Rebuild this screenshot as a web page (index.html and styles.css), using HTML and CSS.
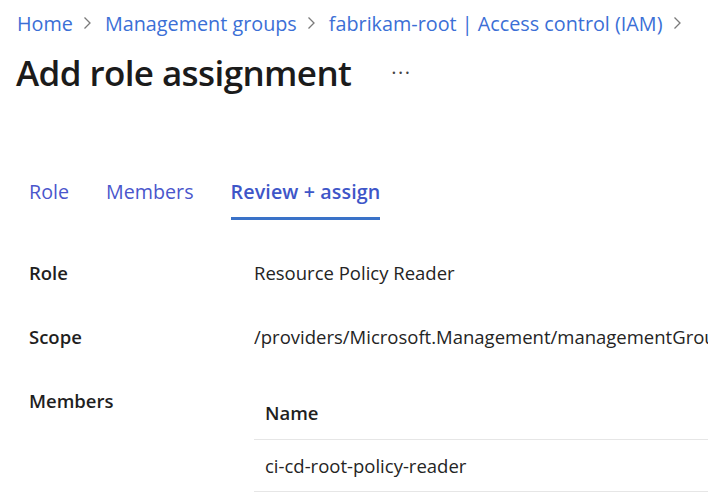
FILE: index.html
```html
<!DOCTYPE html>
<html lang="en">
<head>
<meta charset="utf-8">
<title>Add role assignment</title>
<link rel="stylesheet" href="styles.css">
</head>
<body>
<div class="page">
  <nav class="breadcrumb">
    <a class="crumb" href="#">Home</a>
    <span class="chev"><svg width="9" height="14" viewBox="0 0 9 14"><path d="M1.5 1.5 L7 7 L1.5 12.5" fill="none" stroke="#7a7a7a" stroke-width="1.3"/></svg></span>
    <a class="crumb" href="#">Management groups</a>
    <span class="chev"><svg width="9" height="14" viewBox="0 0 9 14"><path d="M1.5 1.5 L7 7 L1.5 12.5" fill="none" stroke="#7a7a7a" stroke-width="1.3"/></svg></span>
    <a class="crumb" href="#">fabrikam-root | Access control (IAM)</a>
    <span class="chev"><svg width="9" height="14" viewBox="0 0 9 14"><path d="M1.5 1.5 L7 7 L1.5 12.5" fill="none" stroke="#7a7a7a" stroke-width="1.3"/></svg></span>
  </nav>
  <header class="title-row">
    <h1 class="title">Add role assignment</h1>
    <span class="more">···</span>
  </header>
  <div class="tabs">
    <span class="tab">Role</span>
    <span class="tab">Members</span>
    <span class="tab active">Review + assign</span>
  </div>
  <div class="details">
    <div class="row">
      <div class="label">Role</div>
      <div class="value">Resource Policy Reader</div>
    </div>
    <div class="row">
      <div class="label">Scope</div>
      <div class="value clip">/providers/Microsoft.Management/managementGroups</div>
    </div>
    <div class="row">
      <div class="label">Members</div>
      <div class="value">
        <div class="table">
          <div class="th">Name</div>
          <div class="td">ci-cd-root-policy-reader</div>
        </div>
      </div>
    </div>
  </div>
</div>
</body>
</html>
```
FILE: styles.css
```css
html, body {
  margin: 0;
  padding: 0;
  background: #ffffff;
  overflow: hidden;
}
body {
  font-family: "Open Sans", "Noto Sans", "Liberation Sans", sans-serif;
  color: #242424;
}
.page {
  width: 708px;
  height: 495px;
  overflow: hidden;
}
.breadcrumb {
  display: flex;
  align-items: center;
  padding: 9px 0 0 17px;
  height: 28px;
  font-size: 19.8px;
  white-space: nowrap;
}
.crumb {
  color: #3b6fd6;
  text-decoration: none;
}
.chev {
  display: flex;
  align-items: center;
  margin: 0 13px 0 10px;
}
.title-row {
  display: flex;
  align-items: center;
  gap: 40px;
  padding: 12px 0 0 16px;
}
.title {
  margin: 0;
  font-size: 35px;
  font-weight: 600;
  color: #1b1b1b;
  letter-spacing: -0.6px;
  line-height: 48px;
}
.more {
  font-size: 20px;
  color: #444;
  letter-spacing: 1.5px;
  margin-top: -2px;
}
.tabs {
  display: flex;
  gap: 37px;
  padding: 82px 0 0 29px;
}
.tab {
  font-size: 19.7px;
  color: #4a56cc;
  padding-bottom: 12px;
  border-bottom: 3px solid transparent;
  line-height: 26px;
}
.tab.active {
  font-weight: 600;
  color: #3e56c8;
  border-bottom-color: #3a72c8;
  letter-spacing: 0.1px;
}
.details {
  padding: 41px 0 0 29px;
}
.row {
  display: flex;
  min-height: 64px;
}
.label {
  width: 225px;
  flex: none;
  font-size: 18.5px;
  font-weight: 600;
  color: #1f1f1f;
  line-height: 24px;
}
.value {
  font-size: 18.5px;
  color: #242424;
  line-height: 24px;
  min-width: 0;
  flex: 1;
}
.clip {
  white-space: nowrap;
  overflow: hidden;
}
.th {
  padding: 12px 0 14px 11px;
  font-weight: 600;
  color: #1f1f1f;
  border-bottom: 1px solid #e6e6e6;
  line-height: 24px;
}
.td {
  padding: 14px 0 13px 11px;
  border-bottom: 1px solid #e6e6e6;
  line-height: 24px;
}
```
